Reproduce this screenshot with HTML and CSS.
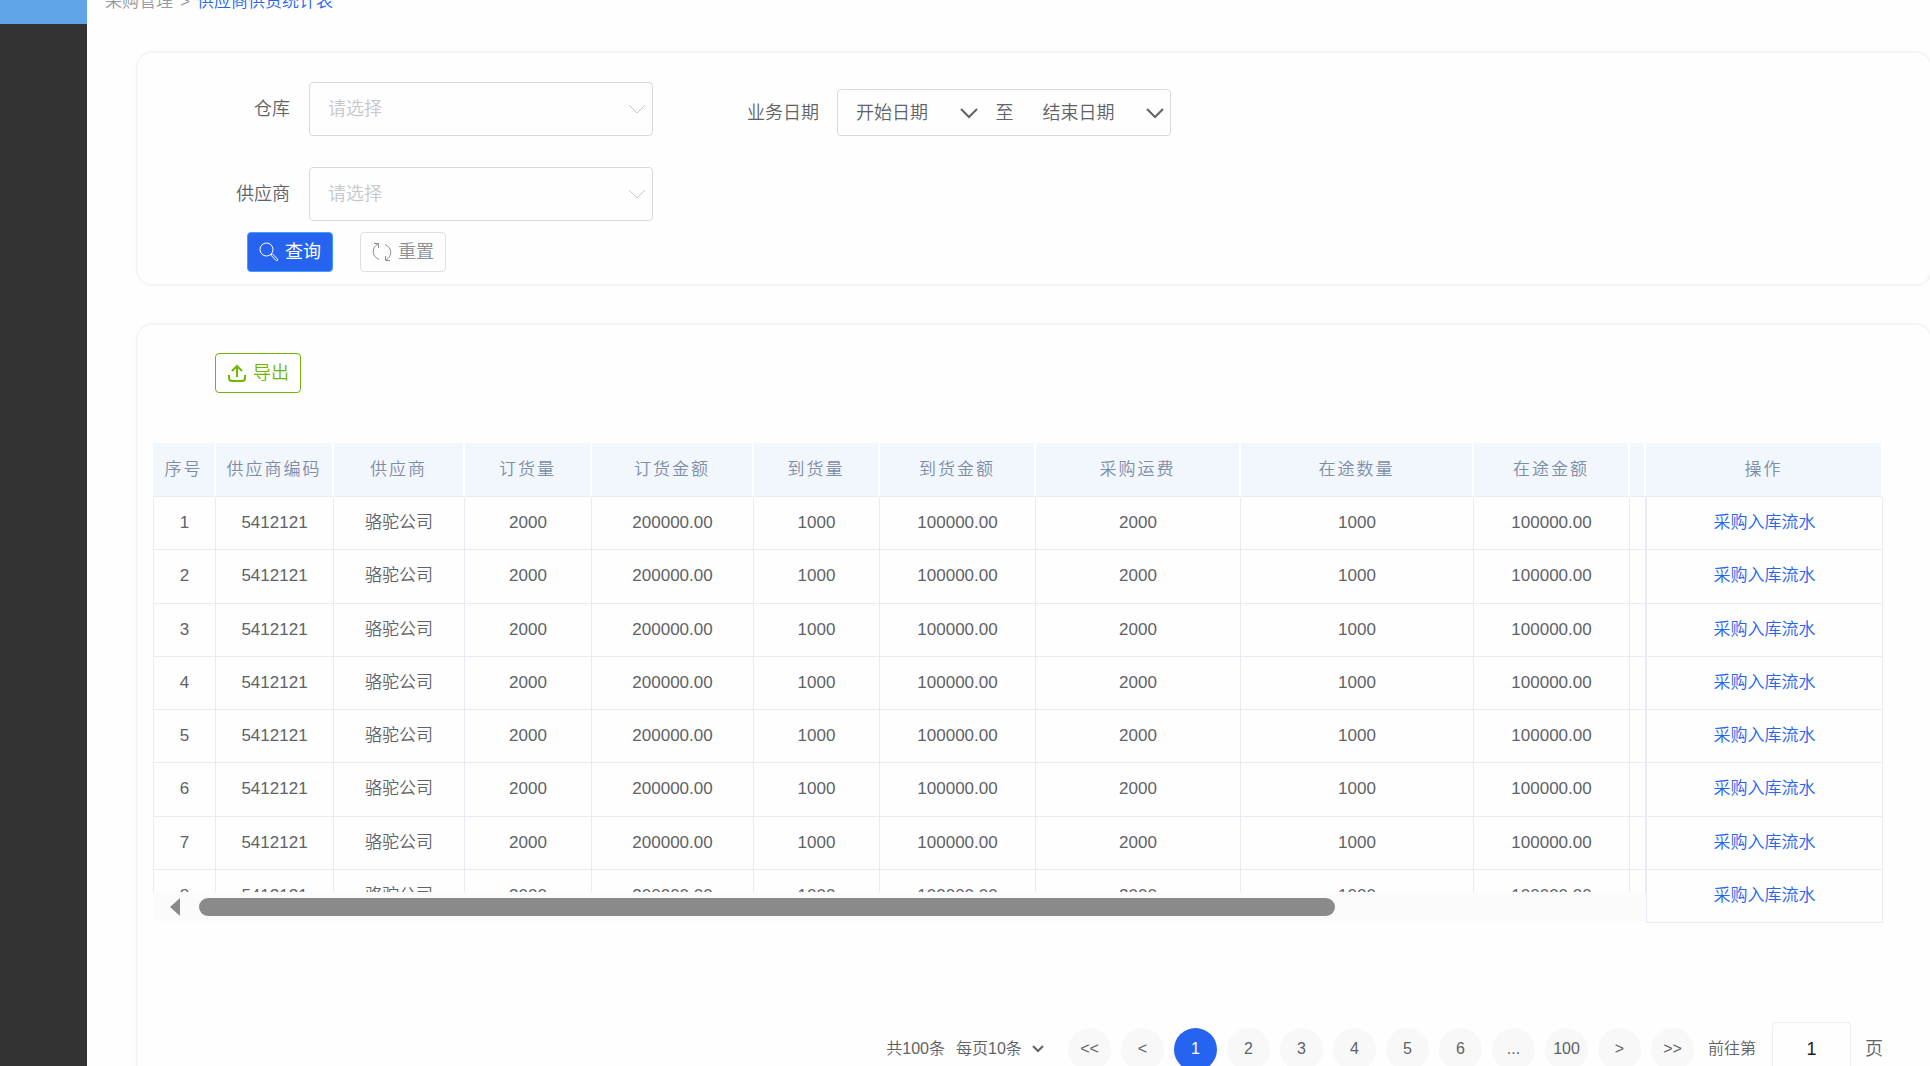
FILE: index.html
```html
<!DOCTYPE html>
<html lang="zh-CN">
<head>
<meta charset="utf-8">
<title>供应商供货统计表</title>
<link rel="stylesheet" href="styles.css">
</head>
<body>
<div class="app">
  <aside class="sidebar"><div class="sidebar-active"></div></aside>
  <main class="main">
    <nav class="breadcrumb"><a href="#">采购管理</a><span>&gt;</span><a href="#" class="current">供应商供货统计表</a></nav>

    <form class="card filters">
      <div class="filter-columns">
        <div class="filter-column">
          <div class="field">
            <label for="warehouse">仓库</label>
            <div class="select-box"><select id="warehouse"><option>请选择</option></select>
              <svg class="chevron" viewBox="0 0 18 12"><path d="M1 2l8 8 8-8"/></svg></div>
          </div>
          <div class="field">
            <label for="supplier">供应商</label>
            <div class="select-box"><select id="supplier"><option>请选择</option></select>
              <svg class="chevron" viewBox="0 0 18 12"><path d="M1 2l8 8 8-8"/></svg></div>
          </div>
        </div>
        <div class="date-field">
          <label for="start">业务日期</label>
          <div class="date-range">
            <div class="date-part"><select id="start"><option>开始日期</option></select>
              <svg class="chevron" viewBox="0 0 18 12"><path d="M1 2l8 8 8-8"/></svg></div>
            <span>至</span>
            <div class="date-part"><select id="end" aria-label="结束日期"><option>结束日期</option></select>
              <svg class="chevron" viewBox="0 0 18 12"><path d="M1 2l8 8 8-8"/></svg></div>
          </div>
        </div>
      </div>
      <div class="actions">
        <button type="button" class="btn primary"><svg viewBox="0 0 20 20"><circle cx="7.5" cy="7.5" r="6.5"/><path d="M12 13.2l1.4-1.4 5.2 5.4q.5 1.800-1.400 1.400z"/></svg>查询</button>
        <button type="reset" class="btn plain"><svg viewBox="0 0 20 20"><path d="M7 17.500C-1 14 0 5 6 2M2 1.500h4.500v4.500M13 2.500c8 3.500 7 12.500 1 15.500M18 18.500h-4.500v-4.500"/></svg>重置</button>
      </div>
    </form>

    <section class="card report">
      <button type="button" class="btn export"><svg viewBox="0 0 20 20"><path d="M10 14V3M5 8l5-5 5 5M2 12v3q0 3 3 3h10q3 0 3-3v-3"/></svg>导出</button>
      <div class="grid">
        <div class="grid-scroll">
          <div class="grid-clip">
            <table>
              <colgroup><col class="c-no"><col class="c-code"><col class="c-name"><col class="c-qty"><col class="c-amount"><col class="c-inqty"><col class="c-inamount"><col class="c-freight"><col class="c-wayqty"><col class="c-wayamount"><col></colgroup>
              <thead><tr><th>序号</th><th>供应商编码</th><th>供应商</th><th>订货量</th><th>订货金额</th><th>到货量</th><th>到货金额</th><th>采购运费</th><th>在途数量</th><th>在途金额</th><th></th></tr></thead>
              <tbody>
                <tr><td>1</td><td>5412121</td><td>骆驼公司</td><td>2000</td><td>200000.00</td><td>1000</td><td>100000.00</td><td>2000</td><td>1000</td><td>100000.00</td><td></td></tr>
                <tr><td>2</td><td>5412121</td><td>骆驼公司</td><td>2000</td><td>200000.00</td><td>1000</td><td>100000.00</td><td>2000</td><td>1000</td><td>100000.00</td><td></td></tr>
                <tr><td>3</td><td>5412121</td><td>骆驼公司</td><td>2000</td><td>200000.00</td><td>1000</td><td>100000.00</td><td>2000</td><td>1000</td><td>100000.00</td><td></td></tr>
                <tr><td>4</td><td>5412121</td><td>骆驼公司</td><td>2000</td><td>200000.00</td><td>1000</td><td>100000.00</td><td>2000</td><td>1000</td><td>100000.00</td><td></td></tr>
                <tr><td>5</td><td>5412121</td><td>骆驼公司</td><td>2000</td><td>200000.00</td><td>1000</td><td>100000.00</td><td>2000</td><td>1000</td><td>100000.00</td><td></td></tr>
                <tr><td>6</td><td>5412121</td><td>骆驼公司</td><td>2000</td><td>200000.00</td><td>1000</td><td>100000.00</td><td>2000</td><td>1000</td><td>100000.00</td><td></td></tr>
                <tr><td>7</td><td>5412121</td><td>骆驼公司</td><td>2000</td><td>200000.00</td><td>1000</td><td>100000.00</td><td>2000</td><td>1000</td><td>100000.00</td><td></td></tr>
                <tr><td>8</td><td>5412121</td><td>骆驼公司</td><td>2000</td><td>200000.00</td><td>1000</td><td>100000.00</td><td>2000</td><td>1000</td><td>100000.00</td><td></td></tr>
              </tbody>
            </table>
          </div>
          <div class="scrollbar"><svg viewBox="0 0 10 18"><path d="M10 0v18L0 9z"/></svg><div class="track"><div class="thumb"></div></div></div>
        </div>
        <table class="fixed">
          <thead><tr><th>操作</th></tr></thead>
          <tbody>
            <tr><td><a href="#">采购入库流水</a></td></tr>
            <tr><td><a href="#">采购入库流水</a></td></tr>
            <tr><td><a href="#">采购入库流水</a></td></tr>
            <tr><td><a href="#">采购入库流水</a></td></tr>
            <tr><td><a href="#">采购入库流水</a></td></tr>
            <tr><td><a href="#">采购入库流水</a></td></tr>
            <tr><td><a href="#">采购入库流水</a></td></tr>
            <tr><td><a href="#">采购入库流水</a></td></tr>
          </tbody>
        </table>
      </div>
      <div class="pagination">
        <span class="total">共100条</span>
        <div class="page-size"><select aria-label="每页条数"><option>每页10条</option></select>
          <svg class="chevron" viewBox="0 0 12 8"><path d="M1 1l5 5 5-5"/></svg></div>
        <div class="pages">
          <button>&lt;&lt;</button><button>&lt;</button><button class="active">1</button><button>2</button><button>3</button><button>4</button><button>5</button><button>6</button><button>...</button><button>100</button><button>&gt;</button><button>&gt;&gt;</button>
        </div>
        <label for="goto">前往第</label>
        <input id="goto" type="text" value="1">
        <span class="unit">页</span>
      </div>
    </section>
  </main>
</div>
</body>
</html>
```
FILE: styles.css
```css
* { box-sizing: border-box; }
body {
  margin: 0;
  height: 100vh;
  overflow: hidden;
  background: #fefefe;
  color: #606266;
  font: 350 17px/24px "Liberation Sans", "Noto Sans CJK SC", sans-serif;
}
a { color: #2563f0; text-decoration: none; }
button, input, select { font: inherit; color: inherit; }
select { appearance: none; background: none; border: 0; padding: 0; width: 100%; outline: 0; }
svg { fill: none; stroke: currentColor; stroke-width: 2; flex: none; }

.app { display: flex; height: 100%; overflow: hidden; }
.sidebar { width: 87px; flex: none; background: #333; }
.sidebar-active { height: 24px; background: #5fa5e8; }
.main { flex: 1; min-width: 0; padding-left: 49px; }

.breadcrumb { display: flex; gap: 7px; height: 51px; margin-left: -31px; align-items: flex-start; }
.breadcrumb > * { margin-top: -10px; color: #999; }
.breadcrumb .current { color: #2563f0; }

.card { margin-right: -2px; border: 2px solid #f5f5f5; border-radius: 16px; box-shadow: 0 0 8px rgba(0, 0, 0, .02); }

.filters { height: 235px; padding-top: 29px; }
.filter-columns { display: flex; align-items: flex-start; gap: 94px; }
.filter-column { display: grid; gap: 31px; padding-left: 64px; }
.field { display: flex; align-items: center; gap: 19px; }
.field label { width: 88px; text-align: right; font-size: 18px; }
.select-box { display: flex; align-items: center; width: 344px; height: 54px; border: 1px solid #d9dade; border-radius: 4px; padding: 0 6px 0 18px; color: #c5c7cc; font-size: 18px; }
.chevron { width: 18px; height: 12px; pointer-events: none; }
.select-box .chevron { stroke-width: 1; }
.date-field { display: flex; align-items: center; gap: 18px; padding-top: 7px; font-size: 18px; }
.date-range { display: flex; align-items: center; gap: 18px; width: 334px; height: 47px; border: 1px solid #d9dade; border-radius: 4px; padding: 0 6px 0 18px; }
.date-range span { margin-right: 11px; }
.date-part { display: flex; align-items: center; flex: 1; }
.actions { display: flex; gap: 27px; padding: 11px 0 0 109px; }

.btn { display: flex; align-items: center; justify-content: center; gap: 6px; height: 40px; width: 86px; padding: 0; border: 1px solid; border-radius: 4px; background: none; font-size: 18px; }
.btn svg { width: 20px; height: 20px; stroke-width: 1; }
.primary { background: #2563f0; border-color: #409eff; color: #fff; font-weight: 400; }
.plain { border-color: #dcdfe6; color: #8c8f94; }
.export { margin-left: 62px; border-color: #70b603; color: #70b603; }
.export svg { stroke-width: 2; }

.report { margin-top: 37px; padding: 28px 47px 60px 15px; }
.grid { display: flex; align-items: flex-start; margin-top: 50px; }
.grid-scroll { flex: 1; min-width: 0; }
.grid-clip { height: 449px; overflow: hidden; }
table { width: 100%; height: 480px; table-layout: fixed; border-collapse: separate; border-spacing: 0; }
.fixed { width: 237px; flex: none; }
th { height: 54px; padding: 0; background: #f2f6fd; border-right: 2px solid #fff; border-bottom: 1px solid #e8ebf4; color: #7d8da5; font-weight: 350; letter-spacing: 2px; }
td { height: 53px; padding: 0; text-align: center; border-right: 1px solid #e8ebf4; border-bottom: 1px solid #e8ebf4; }
td:first-child { border-left: 1px solid #e8ebf4; }
.c-no { width: 63px; }
.c-code { width: 118px; }
.c-name { width: 131px; }
.c-qty { width: 127px; }
.c-amount { width: 162px; }
.c-inqty { width: 126px; }
.c-inamount { width: 156px; }
.c-freight { width: 205px; }
.c-wayqty { width: 233px; }
.c-wayamount { width: 156px; }

.scrollbar { display: flex; align-items: center; gap: 19px; height: 29px; padding-left: 17px; background: #fbfbfb; }
.scrollbar svg { width: 10px; height: 18px; fill: #8a8a8a; stroke: none; }
.track { flex: 1; }
.thumb { width: 78.5%; height: 18px; border-radius: 9px; background: #8a8a8a; }

.pagination { display: flex; align-items: center; justify-content: flex-end; margin-top: 99px; font-size: 16px; }
.total { margin-right: 11px; }
.page-size { display: flex; align-items: center; gap: 10px; margin-right: 24px; }
.page-size .chevron { width: 12px; height: 8px; }
.pages { display: flex; gap: 10px; margin-right: 14px; }
.pages button { width: 43px; height: 43px; padding: 0; border: 0; border-radius: 50%; background: #f8f8f8; }
.pages .active { background: #2563f0; color: #fff; }
.pagination input { width: 79px; height: 54px; margin: 0 14px 0 16px; border: 1px solid #eceef2; border-radius: 4px; background: none; color: #222; text-align: center; font-size: 18px; }
.unit { font-size: 18px; }
```
